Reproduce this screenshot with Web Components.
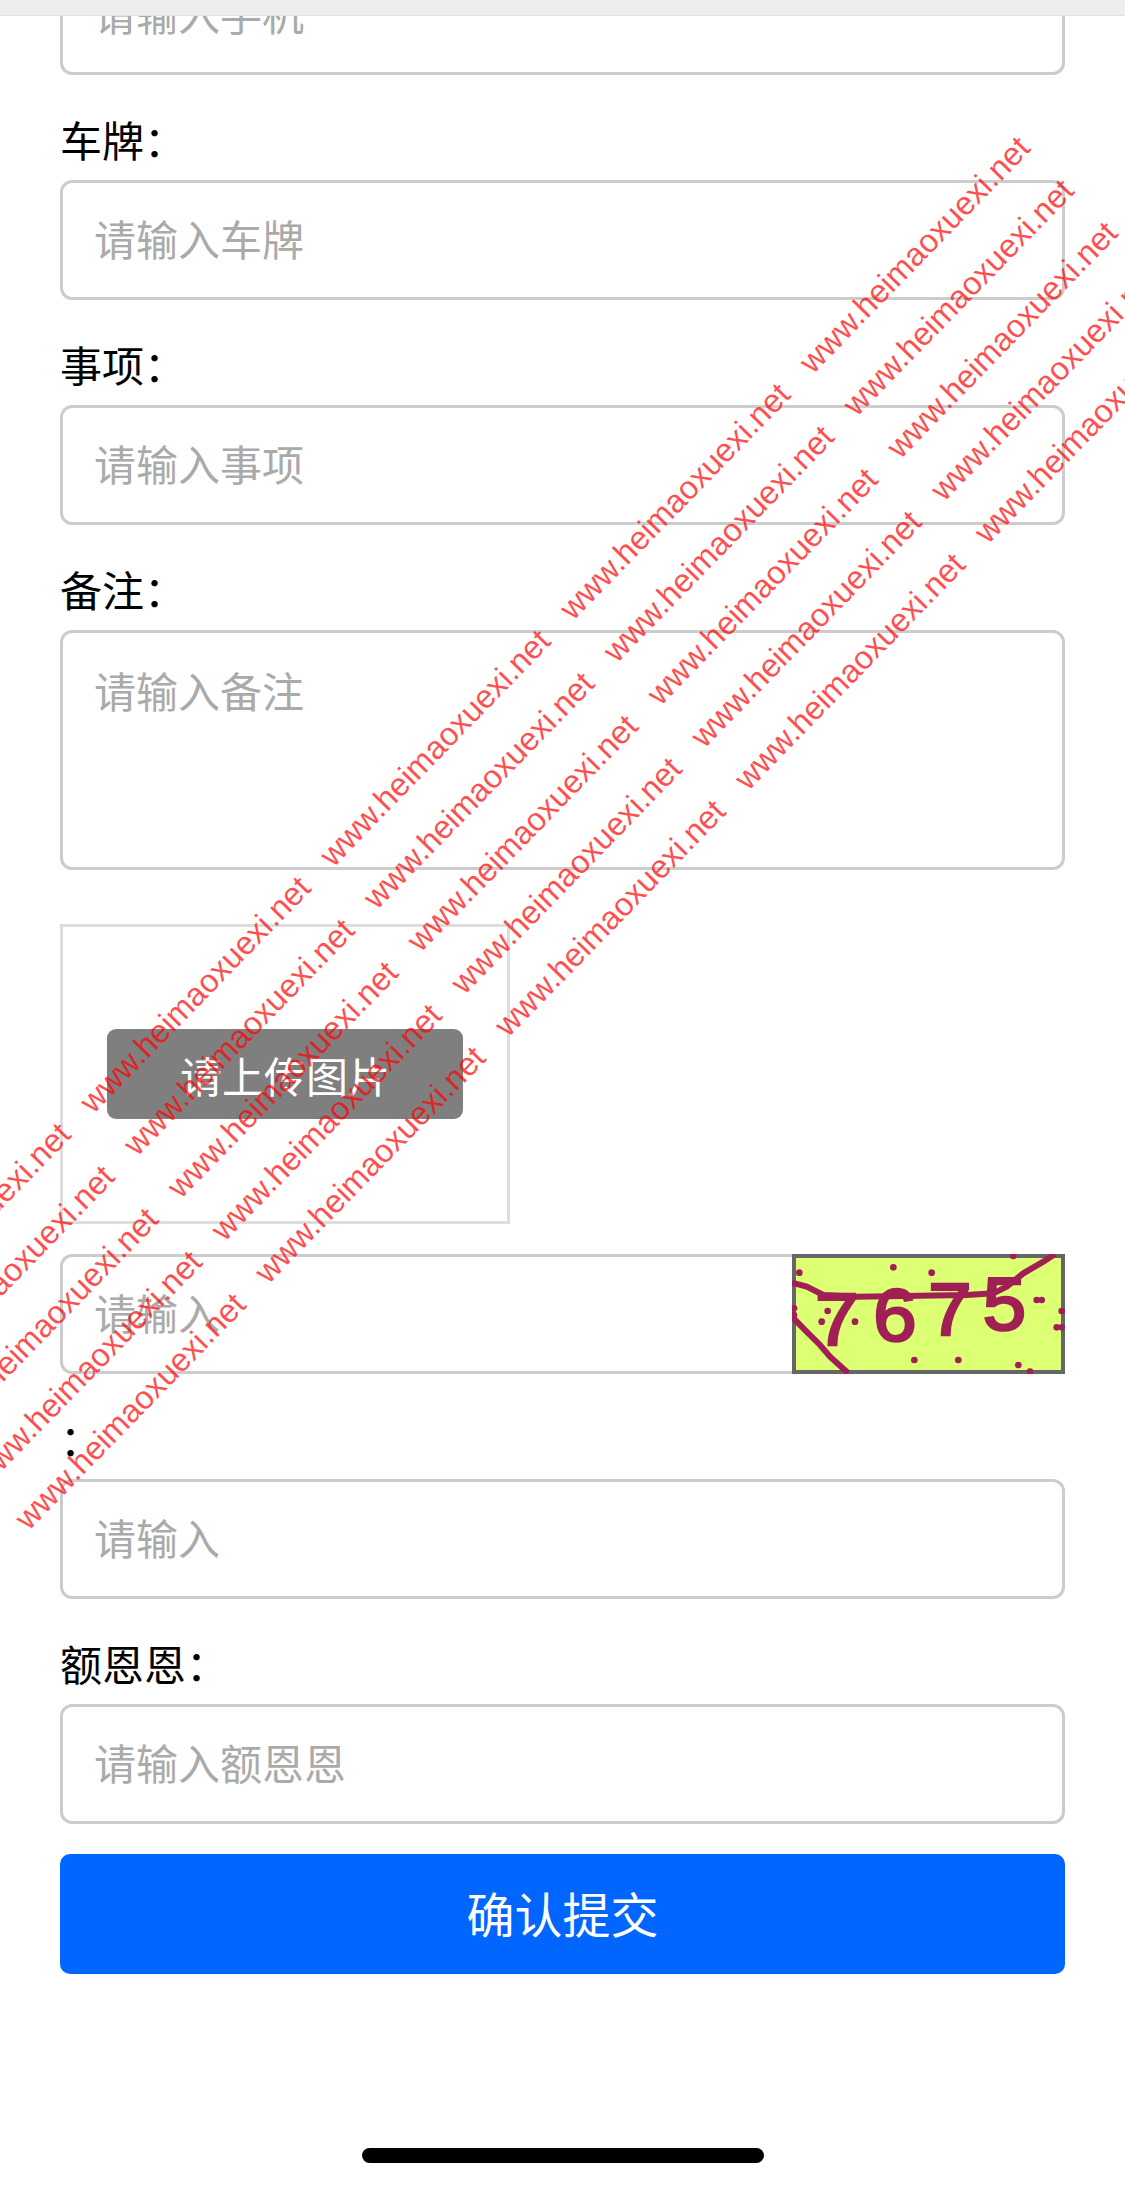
<!DOCTYPE html>
<html lang="zh-CN">
<head>
<meta charset="utf-8">
<title>表单</title>
<style>
  html, body { margin: 0; padding: 0; background: #fff; }
  body { font-family: "Noto Sans CJK SC", "Liberation Sans", sans-serif; color: #000; }
</style>
</head>
<body>

<phone-screen>
  <top-bar></top-bar>
  <form-list>
    <form-input placeholder="请输入手机"></form-input>
    <form-input label="车牌：" placeholder="请输入车牌"></form-input>
    <form-input label="事项：" placeholder="请输入事项"></form-input>
    <form-input label="备注：" placeholder="请输入备注" multiline></form-input>
    <upload-box>请上传图片</upload-box>
    <form-input placeholder="请输入"><captcha-image slot="addon"></captcha-image></form-input>
    <form-input label="：" placeholder="请输入"></form-input>
    <form-input label="额恩恩：" placeholder="请输入额恩恩"></form-input>
    <submit-button>确认提交</submit-button>
  </form-list>
  <water-mark text="www.heimaoxuexi.net"></water-mark>
  <home-indicator></home-indicator>
</phone-screen>

<script>
// =============================================================================
// PhoneScreen - the photographed viewport, content scrolled up a little
// =============================================================================
class PhoneScreen extends HTMLElement {
  constructor() {
    super();
    this.attachShadow({ mode: 'open' }).innerHTML = `
      <style>
        :host {
          display: block;
          position: relative;
          width: 1125px;
          height: 2186px;
          overflow: hidden;
          background: #fff;
        }
      </style>
      <slot></slot>
    `;
  }
}

class TopBar extends HTMLElement {
  constructor() {
    super();
    this.attachShadow({ mode: 'open' }).innerHTML = `
      <style>
        :host {
          display: block;
          position: absolute;
          top: 0;
          left: 0;
          right: 0;
          height: 15px;
          background: #eee;
          border-bottom: 1px solid #e2e2e2;
          z-index: 2;
        }
      </style>
    `;
  }
}

class FormList extends HTMLElement {
  constructor() {
    super();
    this.attachShadow({ mode: 'open' }).innerHTML = `
      <style>
        :host {
          display: flex;
          flex-direction: column;
          gap: 30px;
          margin-top: -45px;
          padding: 0 60px;
        }
      </style>
      <slot></slot>
    `;
  }
}

// =============================================================================
// FormInput - optional label, bordered box with placeholder, optional addon
// =============================================================================
class FormInput extends HTMLElement {
  constructor() {
    super();
    this.attachShadow({ mode: 'open' });
  }

  connectedCallback() {
    const label = this.getAttribute('label');
    const placeholder = this.getAttribute('placeholder') || '';
    this.shadowRoot.innerHTML = `
      <style>
        :host {
          display: block;
          font-size: 42px;
        }
        .label {
          display: flex;
          align-items: center;
          box-sizing: border-box;
          height: 75px;
          padding-bottom: 8px;
          line-height: 1;
          color: #000;
        }
        .row {
          display: flex;
          height: 120px;
        }
        .box {
          flex: 1;
          min-width: 0;
          box-sizing: border-box;
          display: flex;
          align-items: center;
          padding: 0 31px 5px;
          border: 3px solid #ccc;
          border-radius: 12px;
          color: #aaa;
          line-height: 60px;
        }
        :host([multiline]) .row {
          height: 240px;
        }
        :host([multiline]) .box {
          align-items: flex-start;
          padding-top: 27px;
        }
        slot[name="addon"]::slotted(*) {
          flex: none;
        }
        .row.with-addon .box {
          border-right: 0;
          border-radius: 12px 0 0 12px;
        }
      </style>
      ${label ? `<div class="label">${label}</div>` : ''}
      <div class="row">
        <div class="box">${placeholder}</div>
        <slot name="addon"></slot>
      </div>
    `;
    if (this.querySelector('[slot="addon"]')) {
      this.shadowRoot.querySelector('.row').classList.add('with-addon');
    }
  }
}

class UploadBox extends HTMLElement {
  constructor() {
    super();
    this.attachShadow({ mode: 'open' }).innerHTML = `
      <style>
        :host {
          display: flex;
          align-items: center;
          justify-content: center;
          box-sizing: border-box;
          width: 450px;
          height: 300px;
          margin-top: 24px;
          border: 3px solid #ddd;
        }
        .button {
          display: flex;
          align-items: center;
          justify-content: center;
          width: 356px;
          height: 90px;
          border-radius: 9px;
          background: rgba(0, 0, 0, 0.5);
          color: #fff;
          font-size: 42px;
        }
      </style>
      <div class="button"><slot></slot></div>
    `;
  }
}

// Captcha picture: digits stay real text, the noise is drawn over them
class CaptchaImage extends HTMLElement {
  constructor() {
    super();
    const dots = [
      [400, 112], [515, 128], [118, 128], [203, 243], [185, 275], [285, 275],
      [463, 390], [595, 390], [775, 405], [810, 425], [760, 78], [830, 210],
      [845, 210], [905, 243], [890, 292], [905, 292], [102, 235], [102, 255]
    ].map(([x, y]) => `<circle cx="${x}" cy="${y}" r="10"/>`).join('');
    this.attachShadow({ mode: 'open' }).innerHTML = `
      <style>
        :host {
          display: block;
          width: 273px;
          height: 120px;
        }
        svg {
          display: block;
          width: 100%;
          height: 100%;
        }
        text {
          font-family: "Liberation Sans", sans-serif;
          font-size: 225px;
          stroke: #a01f55;
          stroke-width: 8px;
        }
      </style>
      <svg viewBox="96 72 819 360" aria-label="验证码">
        <rect x="102" y="78" width="807" height="348" fill="#dcff73" stroke="#666" stroke-width="12"/>
        <g fill="#a01f55">
          <text x="165" y="345" textLength="130" lengthAdjust="spacingAndGlyphs">7</text>
          <text x="340" y="332" textLength="130" lengthAdjust="spacingAndGlyphs">6</text>
          <text x="505" y="316" textLength="130" lengthAdjust="spacingAndGlyphs">7</text>
          <text x="668" y="300" textLength="130" lengthAdjust="spacingAndGlyphs">5</text>
          ${dots}
        </g>
        <g fill="none" stroke="#a01f55" stroke-width="18">
          <polyline points="96,158 140,170 190,195 290,200 620,195 700,190 740,170 790,130 850,95 885,72"/>
          <polyline points="96,260 130,295 180,345 210,380 265,430"/>
        </g>
      </svg>
    `;
  }
}

class SubmitButton extends HTMLElement {
  constructor() {
    super();
    this.attachShadow({ mode: 'open' }).innerHTML = `
      <style>
        :host {
          display: flex;
          align-items: center;
          justify-content: center;
          box-sizing: border-box;
          height: 120px;
          padding-bottom: 5px;
          border-radius: 10px;
          background: #0066ff;
          color: #fff;
          font-size: 48px;
        }
      </style>
      <slot></slot>
    `;
  }
}

// =============================================================================
// WaterMark - repeated rotated text laid over the whole page
// =============================================================================
class WaterMark extends HTMLElement {
  constructor() {
    super();
    this.attachShadow({ mode: 'open' });
  }

  connectedCallback() {
    const text = this.getAttribute('text');
    const cell = `<span>${text}</span>`;
    this.shadowRoot.innerHTML = `
      <style>
        :host {
          display: block;
          position: absolute;
          inset: 0;
          overflow: hidden;
          pointer-events: none;
          z-index: 1;
        }
        .grid {
          position: absolute;
          left: -178px;
          top: 1335px;
          display: grid;
          grid-template-columns: repeat(5, 344px);
          grid-auto-rows: 61px;
          transform: rotate(-45.8deg);
          transform-origin: 0 0;
          font: 32.5px/61px "Liberation Sans", sans-serif;
          color: rgba(255, 0, 0, 0.7);
          white-space: nowrap;
        }
        span {
          padding-left: 3px;
        }
      </style>
      <div class="grid">${cell.repeat(25)}</div>
    `;
  }
}

class HomeIndicator extends HTMLElement {
  constructor() {
    super();
    this.attachShadow({ mode: 'open' }).innerHTML = `
      <style>
        :host {
          display: block;
          position: absolute;
          left: 362px;
          top: 2148px;
          width: 402px;
          height: 15px;
          border-radius: 8px;
          background: #000;
        }
      </style>
    `;
  }
}

customElements.define('phone-screen', PhoneScreen);
customElements.define('top-bar', TopBar);
customElements.define('form-list', FormList);
customElements.define('form-input', FormInput);
customElements.define('upload-box', UploadBox);
customElements.define('captcha-image', CaptchaImage);
customElements.define('submit-button', SubmitButton);
customElements.define('water-mark', WaterMark);
customElements.define('home-indicator', HomeIndicator);
</script>
</body>
</html>
